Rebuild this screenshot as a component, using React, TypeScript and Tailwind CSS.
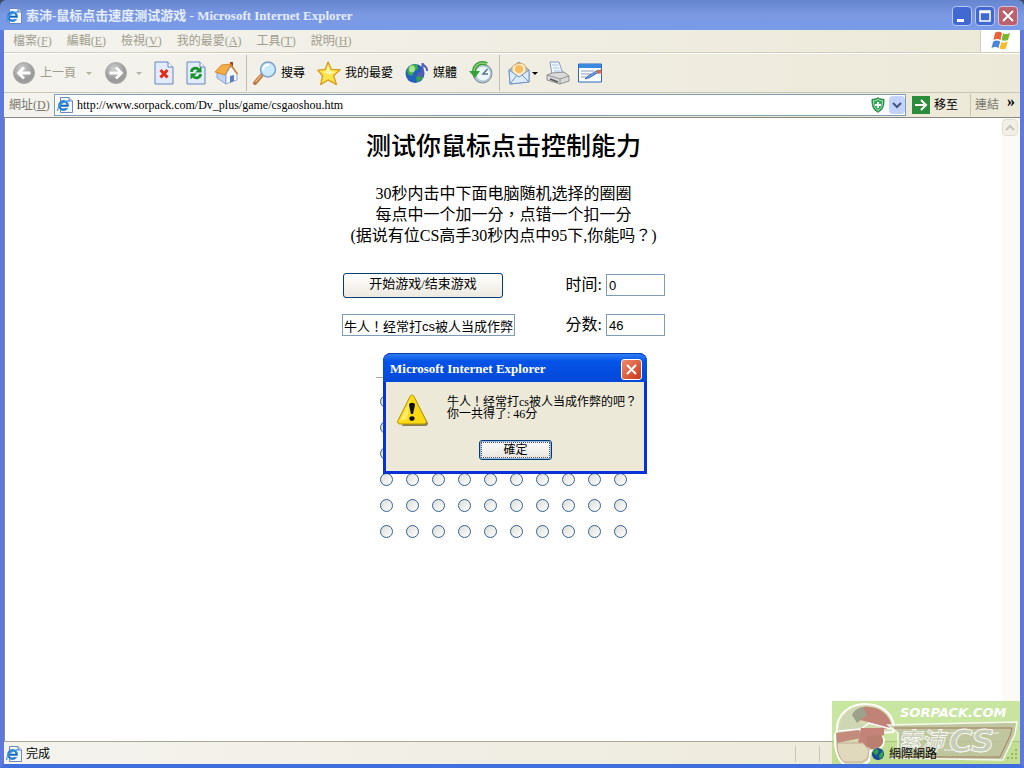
import React from 'react';

interface ToolTextProps {
  children: React.ReactNode;
}

const IeIcon = () => (
  <svg viewBox="0 0 16 16" className="h-4 w-4 shrink-0">
    <path d="M3.500.5h8.500l3.500 3.500v11.500h-12z" fill="#f4f8ff" stroke="#6f87b8" />
    <path d="M12 .5v3.500h3.500" fill="#c9d8f2" stroke="#6f87b8" />
    <circle cx="6.500" cy="8.500" r="4.200" fill="#fff" stroke="#2a7fcf" strokeWidth="2.400" />
    <path d="M3 8.700h8" stroke="#1b62b4" strokeWidth="2" />
    <path d="M9 9.800h3.500v1.400H9z" fill="#f4f8ff" />
    <path d="M1 14C-.5 11 5 4 12.500 3.800" fill="none" stroke="#3a9be6" strokeWidth="1.300" />
  </svg>
);

const RoundArrow = ({ forward = false }: { forward?: boolean }) => (
  <svg viewBox="0 0 24 24" className="h-6 w-6 shrink-0">
    <defs>
      <radialGradient id={forward ? 'fwd' : 'back'} cx="40%" cy="30%">
        <stop offset="0" stopColor="#cfcfcf" />
        <stop offset="1" stopColor="#9b9b9b" />
      </radialGradient>
    </defs>
    <circle cx="12" cy="12" r="10.500" fill={forward ? 'url(#fwd)' : 'url(#back)'} stroke="#a9a9a9" />
    <path
      d={forward ? 'M5.500 12H17M12 6.500l5.500 5.500-5.500 5.500' : 'M18.500 12H7M12 6.500L6.500 12l5.500 5.500'}
      fill="none"
      stroke="#fff"
      strokeWidth="2.800"
    />
  </svg>
);

const StopIcon = () => (
  <svg viewBox="0 0 20 24" className="h-6 w-5">
    <path d="M1 1h13l5 5v17H1z" fill="#e3ecfc" stroke="#6585c0" />
    <path d="M14 1v5h5" fill="#fff" stroke="#6585c0" />
    <path d="M6.500 9l7 7.500M13.500 9l-7 7.500" stroke="#e22b12" strokeWidth="3" />
  </svg>
);

const RefreshIcon = () => (
  <svg viewBox="0 0 20 24" className="h-6 w-5">
    <path d="M1 1h13l5 5v17H1z" fill="#e3ecfc" stroke="#6585c0" />
    <path d="M14 1v5h5" fill="#fff" stroke="#6585c0" />
    <path d="M5.500 11c0-4 5-5 7-2.500" fill="none" stroke="#16922a" strokeWidth="2.800" />
    <path d="M15.500 5.500v6H9z" fill="#16922a" />
    <path d="M14.500 13c0 4-5 5-7 2.500" fill="none" stroke="#16922a" strokeWidth="2.800" />
    <path d="M4.500 18.500v-6H11z" fill="#16922a" />
  </svg>
);

const HomeIcon = () => (
  <svg viewBox="0 0 24 24" className="h-6 w-6">
    <path d="M16 1h3v8h-3z" fill="#a93c22" />
    <path d="M3 11v6l9 6V13L9 8z" fill="#bfd3f4" stroke="#7c98ce" strokeWidth=".8" />
    <path d="M12 13l5-8 6 8v6l-11 4z" fill="#f3f7ff" stroke="#7c98ce" strokeWidth=".8" />
    <path d="M1 11L7.500 4 17 3l-6 11z" fill="#f5ac43" stroke="#cf7b20" strokeWidth=".8" />
    <path d="M16.500 3.500L23.500 13" stroke="#d88232" strokeWidth="1.600" />
    <path d="M16 15l4-1v6l-4 1.500z" fill="#5b7dbb" />
  </svg>
);

const SearchIcon = () => (
  <svg viewBox="0 0 24 24" className="h-6 w-6">
    <path d="M9 14l-7 8" stroke="#bd773d" strokeWidth="4" strokeLinecap="round" />
    <path d="M8.500 14l-6 7" stroke="#e9b682" strokeWidth="1.300" />
    <circle cx="15" cy="8.500" r="7.500" fill="#c9eafa" stroke="#7e9fca" strokeWidth="1.500" />
    <path d="M10 9c0-4 3-5.500 6-5" fill="none" stroke="#fff" strokeWidth="2" />
  </svg>
);

const StarIcon = () => (
  <svg viewBox="0 0 26 26" className="h-6 w-6">
    <path
      d="M12 1l3.500 8 9.500.5-7 6.500 3 9.500-9-5-8 5 2-9.500-5-6 8-1z"
      fill="#fce44e"
      stroke="#d89c1c"
      strokeWidth="1.400"
      strokeLinejoin="round"
    />
    <path d="M12 5l2 6 6 1-6 3-7-3 3-1z" fill="#fff6ad" />
  </svg>
);

const MediaIcon = () => (
  <svg viewBox="0 0 24 24" className="h-6 w-6">
    <circle cx="10" cy="12.500" r="9.500" fill="#2361bd" />
    <path d="M2 10c1-5 6-8 10-6l1 4-4 2-2 5-3-1z" fill="#3db13e" />
    <path d="M11 16l4-2 3 2c-1 3-3 4-6 5z" fill="#35a14b" />
    <ellipse cx="7" cy="8" rx="3" ry="3.500" fill="#c6efac" opacity=".8" />
    <path d="M17.500 2v11M17.500 2c0 3 5 3 4.500 8" fill="none" stroke="#5a5db0" strokeWidth="2" />
    <ellipse cx="15.500" cy="13.500" rx="3" ry="2.400" fill="#5a5db0" />
  </svg>
);

const HistoryIcon = () => (
  <svg viewBox="0 0 24 24" className="h-6 w-6">
    <circle cx="13.500" cy="12.500" r="9.500" fill="#b6c5d2" stroke="#7b8f9e" />
    <circle cx="14" cy="12.500" r="7" fill="#edf6fb" />
    <path d="M18.500 8L14 13h5" fill="none" stroke="#54748e" strokeWidth="1.500" />
    <path d="M18 3C10 0 5 5 5 11" fill="none" stroke="#37993a" strokeWidth="4" />
    <path d="M18 3C10 0 5 5 5 11" fill="none" stroke="#8cd777" strokeWidth="1.400" />
    <path d="M0 10h11l-5 7z" fill="#37a03b" />
  </svg>
);

const MailIcon = () => (
  <svg viewBox="0 0 22 24" className="h-6 w-[22px]">
    <path d="M1 9L11 1l10 8v12L2 23z" fill="#aac9ed" stroke="#6e94c4" />
    <path d="M4 6c4-5 12-5 14 0v7l-7 5-7-4z" fill="#fdebc7" stroke="#d3a45b" />
    <circle cx="11" cy="8" r="4" fill="#f5bc60" />
    <path d="M1 9l10 7 10-7v12L2 23z" fill="#dcebfc" stroke="#6e94c4" />
    <path d="M2 23l7-9M21 21l-7-7" stroke="#6e94c4" />
  </svg>
);

const PrintIcon = () => (
  <svg viewBox="0 0 24 24" className="h-6 w-6">
    <path d="M4 1h9l4 12-11 1z" fill="#edf5ff" stroke="#859cc0" />
    <path d="M6 4h6M7 7h6M8 10h6" stroke="#afc4df" />
    <path d="M1 14l5-2 12-1 5 4v5l-9 3-13-4z" fill="#dadada" stroke="#8f8f8f" />
    <path d="M1 14l13 4 9-3M14 18v5" fill="none" stroke="#929292" />
    <path d="M4 18l8 3" stroke="#555" strokeWidth="1.500" />
  </svg>
);

const EditIcon = () => (
  <svg viewBox="0 0 24 20" className="h-5 w-6">
    <path d="M.5 1h23v18H.5z" fill="#fff" stroke="#2869bd" />
    <path d="M1 1h22v4H1z" fill="#3c8ae0" />
    <path d="M3 8h13M3 11h10M3 14h7" stroke="#8b9bb0" />
    <path d="M21 9l-10 6-4 1 3-3 10-6z" fill="#6f9ee1" stroke="#3661a6" strokeWidth=".8" />
    <path d="M19 7.500l4-1 1 3.500-4 1z" fill="#e16846" />
  </svg>
);

const WindowsFlag = () => (
  <svg viewBox="0 0 20 20" className="h-5 w-5">
    <path d="M4 2c3-2 5-1 7 0L9.500 9C7 7.500 5 8 2.500 9z" fill="#e7633b" />
    <path d="M12 2.500c3 1 5 .5 7-.5l-2 7c-2 1-4 1-6.500.3z" fill="#77b82f" />
    <path d="M2.200 10.500c3-1.500 5-1 7 0L7.500 17C5 15.500 3 16 .5 17z" fill="#4c86d8" />
    <path d="M10.300 11c2.500 1 4.500.5 6.500-.5l-2 7c-2 1.200-4 1-6.300 0z" fill="#f4bd2b" />
  </svg>
);

const WarningIcon = () => (
  <svg viewBox="0 0 32 32" className="h-8 w-8 shrink-0">
    <path d="M17 3l14 26c0 2-1 3-3 3H5z" fill="#88825c" />
    <path
      d="M13 2.500c1-2 3-2 4 0l12 24c1 2 0 3.500-2 3.500H3c-2 0-3-1.500-2-3.500z"
      fill="#fbd913"
      stroke="#b49404"
    />
    <path d="M14 4L3 27l7-2z" fill="#fff28d" opacity=".7" />
    <path d="M12 11c0-3 6-3 6 0l-2 9h-2z" fill="#111" />
    <ellipse cx="15" cy="24.500" rx="2.600" ry="2.300" fill="#111" />
  </svg>
);

const ShieldIcon = () => (
  <svg viewBox="0 0 14 16" className="h-4 w-[14px]">
    <path d="M7 .7c2 1.500 4 1.600 6 1.600 0 7-1 10-6 13-5-3-6-6-6-13 2 0 4-.1 6-1.600z" fill="#2fa653" stroke="#20813e" />
    <path d="M7 2.500c1.500 1 3 1.200 4.500 1.200 0 5-1 7.500-4.500 9.800-3.500-2.300-4.500-4.800-4.500-9.800C4 3.700 5.500 3.500 7 2.500z" fill="none" stroke="#c9f0d0" strokeWidth=".8" />
    <path d="M7 5v6M4 8h6" stroke="#fff" strokeWidth="2" />
  </svg>
);

const SiteLogo = () => (
  <svg viewBox="0 0 188 63" className="h-[63px] w-[188px]">
    <path d="M0 0h188v63H0z" fill="#a8d667" opacity=".62" />
    {/* helmet */}
    <path d="M5 30C4 14 17 3 33 3c16 0 27 9 29 22l-1 6-14 1 5 6c0 8-6 13-14 12l-1 10-6 4H13C6 60 2 48 3 34z" fill="#d3dcb0" stroke="#fff" strokeWidth="2" />
    <path d="M8 28C8 16 18 7 29 6l-8 10 2 6 12 2-3 7-26 2z" fill="#cfd6b4" />
    <path d="M20 14C23 8 29 5 36 6l-1 8-10 8z" fill="#9da08a" />
    <path d="M31 6c15-2 27 7 29 20l-7 2-17-7-8-2 7-5z" fill="#c18377" />
    <path d="M7 30l22-2 8-6 22 6" fill="none" stroke="#fff" strokeWidth="1.500" />
    <path d="M29 27h23v7l-11 3v9h-9l-6-5z" fill="#c58279" />
    <path d="M35 35l14-1c5 7 1 14-10 14l-5-3z" fill="#b98070" />
    <path d="M4 32l23-3 2 8-24 5z" fill="#c38b7b" />
    <path d="M5 42h26l6 7-1 8-6 4H12c-5-4-7-11-7-19z" fill="#e0d9bb" stroke="#c8a791" />
    {/* banner */}
    <path d="M56 24l129-3-2 12-12 26-112-2 7-6V32z" fill="#bfc2a0" opacity=".85" stroke="#fff" strokeWidth="1.500" />
    <path d="M62 27h118l-2 8-10 21H64" fill="none" stroke="#a5795f" />
    <path d="M108 32h59M112 49h44" stroke="#fff" opacity=".8" />
    <text x="68" y="16" fontFamily="DejaVu Sans, sans-serif" fontSize="13" fontStyle="italic" fontWeight="bold" fill="#fff">SORPACK.COM</text>
    <text x="66" y="48" fontFamily="Noto Sans CJK SC, sans-serif" fontSize="23" fontStyle="italic" fontWeight="bold" fill="#c8cdb8" stroke="#fff" strokeWidth=".7">索沛</text>
    <text x="117" y="51" fontFamily="DejaVu Sans, sans-serif" fontSize="32" fontStyle="italic" fontWeight="bold" fill="#c8cdb8" stroke="#fff" strokeWidth=".8">CS</text>
    <path d="M183 48h2v2h-2zM179 52h2v2h-2zM183 52h2v2h-2zM175 56h2v2h-2zM179 56h2v2h-2zM183 56h2v2h-2z" fill="#96b76c" />
  </svg>
);

const ToolText = ({ children }: ToolTextProps) => <span className="text-xs whitespace-nowrap">{children}</span>;

const menus = [
  ['檔案', 'F'],
  ['編輯', 'E'],
  ['檢視', 'V'],
  ['我的最愛', 'A'],
  ['工具', 'T'],
  ['說明', 'H'],
];

const TitleBar = () => (
  <header className="flex h-[30px] items-center rounded-t-md bg-linear-to-b from-[#6685cf] via-[#7b98e2] to-[#789be8] px-[6px] pt-0.5">
    <IeIcon />
    <h1 className="ml-1 min-w-0 flex-1 truncate font-['Liberation_Serif','Noto_Sans_CJK_SC',serif] text-[13px] font-bold text-[#e4ecff]">
      索沛-鼠标点击速度测试游戏 - Microsoft Internet Explorer
    </h1>
    <div className="flex gap-[3px]">
      <button aria-label="最小化" className="h-5 w-5 rounded-sm border border-[#b9c8f5] bg-[#4268d2]">
        <svg viewBox="0 0 18 18"><path d="M4 12h7v3H4z" fill="#fff" /></svg>
      </button>
      <button aria-label="最大化" className="h-5 w-5 rounded-sm border border-[#b9c8f5] bg-[#4268d2]">
        <svg viewBox="0 0 18 18"><path d="M4 4h10v10H4zM4 5.500h10" fill="none" stroke="#fff" strokeWidth="1.500" /></svg>
      </button>
      <button aria-label="關閉" className="h-5 w-5 rounded-sm border border-[#d9c3dc] bg-[#b9616c]">
        <svg viewBox="0 0 18 18"><path d="M4 4l10 10M14 4L4 14" stroke="#fff" strokeWidth="2" /></svg>
      </button>
    </div>
  </header>
);

const MenuBar = () => (
  <nav className="flex h-[23px] items-stretch border-b border-[#d2cebd] text-xs text-[#a09d8e]">
    <div className="flex flex-1 items-center gap-[15px] pl-[9px]">
      {menus.map(([name, key]) => (
        <button key={key} className="whitespace-nowrap">
          {name}(<u>{key}</u>)
        </button>
      ))}
    </div>
    <div className="flex w-10 items-center justify-center border-l border-[#d2cebd] bg-white">
      <WindowsFlag />
    </div>
  </nav>
);

const Toolbar = () => (
  <div className="flex h-10 items-center border-t border-b border-t-white border-b-[#c9c5b5] pl-2">
    <button className="flex items-center gap-1 text-[#a09d8e]">
      <RoundArrow />
      <ToolText>上一頁</ToolText>
      <span className="ml-1.5 border-x-[3px] border-t-[3px] border-x-transparent border-t-[#b5b2a6]" />
    </button>
    <button aria-label="下一頁" className="ml-3 flex items-center gap-2">
      <RoundArrow forward />
      <span className="border-x-[3px] border-t-[3px] border-x-transparent border-t-[#b5b2a6]" />
    </button>
    <button aria-label="停止" className="ml-3"><StopIcon /></button>
    <button aria-label="重新整理" className="ml-3"><RefreshIcon /></button>
    <button aria-label="首頁" className="ml-2"><HomeIcon /></button>
    <div className="ml-2 h-9 border-l border-[#c2beae]" />
    <button className="ml-1.5 flex items-center gap-1"><SearchIcon /><ToolText>搜尋</ToolText></button>
    <button className="ml-3 flex items-center gap-1"><StarIcon /><ToolText>我的最愛</ToolText></button>
    <button className="ml-3 flex items-center gap-1"><MediaIcon /><ToolText>媒體</ToolText></button>
    <button aria-label="記錄" className="ml-3"><HistoryIcon /></button>
    <div className="ml-1.5 h-9 border-l border-[#c2beae]" />
    <button aria-label="郵件" className="ml-2 flex items-center gap-0.5">
      <MailIcon />
      <span className="border-x-[3px] border-t-[3px] border-x-transparent border-t-black" />
    </button>
    <button aria-label="列印" className="ml-2"><PrintIcon /></button>
    <button aria-label="編輯" className="ml-2"><EditIcon /></button>
  </div>
);

const AddressBar = () => (
  <div className="flex h-[25px] items-center border-b border-[#8b887d] text-xs">
    <label htmlFor="address" className="w-[50px] pl-[5px] whitespace-nowrap text-[#77756b]">
      網址(<u>D</u>)
    </label>
    <div className="flex h-[22px] flex-1 items-center border border-[#7f9db9] bg-white pl-0.5">
      <IeIcon />
      <input
        id="address"
        defaultValue="http://www.sorpack.com/Dv_plus/game/csgaoshou.htm"
        className="ml-1 min-w-0 flex-1 font-['Liberation_Serif',serif] text-xs outline-none"
      />
      <ShieldIcon />
      <button aria-label="網址清單" className="ml-1 flex h-[18px] w-4 items-center justify-center rounded-sm bg-[#c3d3fb]">
        <svg viewBox="0 0 10 8" className="h-2 w-2.5"><path d="M1 2l4 4 4-4" fill="none" stroke="#42567f" strokeWidth="2" /></svg>
      </button>
    </div>
    <button className="ml-1.5 flex items-center gap-1 pr-3">
      <svg viewBox="0 0 18 18" className="h-[18px] w-[18px]">
        <path d="M0 0h18v18H0z" fill="#2b8c3c" />
        <path d="M3 9h11M9 4l5 5-5 5" fill="none" stroke="#fff" strokeWidth="2" />
      </svg>
      移至
    </button>
    <button className="flex h-[22px] w-[50px] items-center border-l border-[#c9c5b5] pl-1 text-[#77756b]">
      連結
      <span className="ml-2 pb-1.5 text-base font-bold text-black">»</span>
    </button>
  </div>
);

const GamePage = () => (
  <main className="flex min-h-0 flex-1 border-l border-[#8b887d] bg-white">
    <div className="min-w-0 flex-1 overflow-hidden font-['Liberation_Serif','Noto_Sans_CJK_TC',serif] text-black">
      <h2 className="mt-[13px] text-center text-[25px] leading-8 font-medium">测试你鼠标点击控制能力</h2>
      <p className="mt-5 text-center text-base leading-[21px]">
        30秒内击中下面电脑随机选择的圈圈
        <br />
        每点中一个加一分，点错一个扣一分
        <br />
        (据说有位CS高手30秒内点中95下,你能吗？)
      </p>
      <form className="mx-auto mt-[26px] w-[323px]">
        <div className="flex h-[26px] items-center justify-between">
          <button
            type="button"
            className="ml-px h-[25px] w-40 rounded-[3px] border border-[#003c74] bg-linear-to-b from-white to-[#ece9df] pb-1 text-[13px]"
          >
            开始游戏/结束游戏
          </button>
          <label className="flex items-center gap-1">
            时间:
            <input defaultValue="0" className="h-[22px] w-[59px] border border-[#7f9db9] px-0.5 font-['Liberation_Sans',sans-serif] text-[13px]" />
          </label>
        </div>
        <div className="mt-[14px] flex h-[26px] items-center justify-between">
          <input
            aria-label="评语"
            defaultValue="牛人！经常打cs被人当成作弊"
            className="h-[22px] w-[173px] border border-[#7f9db9] px-px font-['Liberation_Sans','Noto_Sans_CJK_TC',sans-serif] text-[13px]"
          />
          <label className="flex items-center gap-1">
            分数:
            <input defaultValue="46" className="h-[22px] w-[59px] border border-[#7f9db9] px-0.5 font-['Liberation_Sans',sans-serif] text-[13px]" />
          </label>
        </div>
      </form>
      <hr className="mx-auto mt-[39px] w-[255px] border-[#aca899]" />
      <div className="mx-auto mt-[17px] grid w-[247px] grid-cols-10 gap-[13px]">
        {Array.from({ length: 60 }, (_, i) => (
          <input
            key={i}
            type="radio"
            aria-label={`圈圈 ${i + 1}`}
            className="h-[13px] w-[13px] appearance-none rounded-full border border-[#336092] bg-linear-to-br from-[#dcdcd7] to-white"
          />
        ))}
      </div>
    </div>
    <div className="w-[18px] bg-[#fbfaf6] pt-px">
      <button aria-label="向上捲動" className="flex h-[17px] w-4 items-center justify-center rounded-sm border border-[#e0ddd0] bg-[#f1efe6]">
        <svg viewBox="0 0 10 8" className="h-2 w-2.5"><path d="M1 6l4-4 4 4" fill="none" stroke="#c6c4ba" strokeWidth="2" /></svg>
      </button>
    </div>
  </main>
);

const StatusBar = () => (
  <footer className="flex h-[23px] items-center border-t border-[#aca899] pt-0.5 pl-0.5 text-xs">
    <IeIcon />
    <span className="ml-1 flex-1">完成</span>
    <div className="h-4 w-6 border-l border-[#cbc7b8]" />
    <div className="h-4 w-[52px] border-l border-[#cbc7b8]" />
    <svg viewBox="0 0 16 16" className="z-20 h-[14px] w-[14px]">
      <circle cx="8" cy="8" r="7" fill="#174e97" />
      <path d="M2 5l5-3 2 3-3 5zM9 9l5-5v6l-4 4z" fill="#35a148" />
    </svg>
    <span className="z-20 ml-1 w-[131px]">網際網路</span>
  </footer>
);

const AlertDialog = () => (
  <div
    role="alertdialog"
    aria-labelledby="alert-title"
    className="absolute top-[353px] left-[383px] w-[264px] rounded-t-lg bg-[#0831d9] px-[3px] pb-[3px] text-black"
  >
    <div className="-mx-[3px] flex h-[29px] items-center justify-between rounded-t-lg border-t border-[#0a3fb5] bg-linear-to-b from-[#2f7cf0] via-[#0453e8] via-25% to-[#0448d8] pt-0.5 pr-[5px] pl-[7px]">
      <h2 id="alert-title" className="font-['Liberation_Serif',serif] text-[13px] font-bold text-white">
        Microsoft Internet Explorer
      </h2>
      <button aria-label="關閉" className="h-[21px] w-[21px] rounded-[3px] border border-white bg-linear-to-br from-[#f08a6b] to-[#c73512]">
        <svg viewBox="0 0 19 19"><path d="M5 5l9 9M14 5l-9 9" stroke="#fff" strokeWidth="2" /></svg>
      </button>
    </div>
    <div className="h-[89px] bg-[#ece9d8] pt-3 pl-[11px]">
      <div className="flex">
        <WarningIcon />
        <p className="mt-0.5 ml-[18px] font-['Liberation_Serif','Noto_Sans_CJK_TC',serif] text-xs leading-3 whitespace-nowrap">
          牛人！经常打cs被人当成作弊的吧？
          <br />
          你一共得了: 46分
        </p>
      </div>
      <button className="mt-[14px] ml-[82px] h-5 w-[73px] rounded-[3px] border border-[#003c74] bg-linear-to-b from-white to-[#e6e4dc] p-px text-xs ring-1 ring-[#98b8ea] ring-inset">
        <span className="flex h-full items-center justify-center border border-dotted border-[#555]">確定</span>
      </button>
    </div>
  </div>
);

const App: React.FC = () => {
  return (
    <div className="relative flex h-screen flex-col overflow-hidden bg-[#3f4b60] font-['Liberation_Serif','Noto_Sans_CJK_TC',serif] text-black">
      <TitleBar />
      <div className="flex min-h-0 flex-1 flex-col border-x-4 border-b-4 border-[#5f78dc] border-b-[#3f6fdc] bg-linear-to-r from-[#f4f3ee] to-[#ece9d8]">
        <MenuBar />
        <Toolbar />
        <AddressBar />
        <GamePage />
        <StatusBar />
      </div>
      <div className="absolute right-1 bottom-1 z-10"><SiteLogo /></div>
      <AlertDialog />
    </div>
  );
};

export default App;
